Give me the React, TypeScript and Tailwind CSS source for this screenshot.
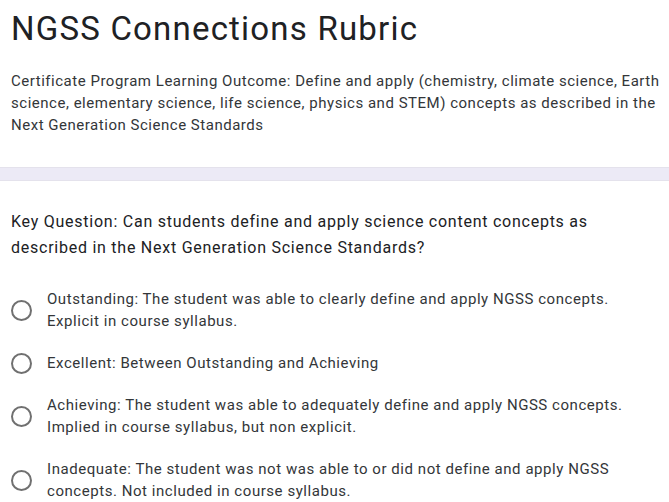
const options = [
  "Outstanding: The student was able to clearly define and apply NGSS concepts. Explicit in course syllabus.",
  "Excellent: Between Outstanding and Achieving",
  "Achieving: The student was able to adequately define and apply NGSS concepts. Implied in course syllabus, but non explicit.",
  "Inadequate: The student was not was able to or did not define and apply NGSS concepts. Not included in course syllabus.",
];

function Radio() {
  return (
    <span className="block w-[21px] h-[21px] shrink-0 rounded-full border-2 border-[#707070]" />
  );
}

export default function App() {
  return (
    <div className="w-[669px] h-[502px] overflow-hidden bg-white text-[#202124] font-['Roboto',sans-serif]">
      <div className="pl-[11px] pr-2 pt-[9px] pb-[31px]">
        <h1 className="text-[33px] leading-[40px] font-normal tracking-[1.2px]">NGSS Connections Rubric</h1>
        <p className="mt-[21px] text-[15px] leading-[22px] tracking-[0.52px] text-[#333639] w-[655px]">
          Certificate Program Learning Outcome: Define and apply (chemistry, climate science, Earth
          science, elementary science, life science, physics and STEM) concepts as described in the
          Next Generation Science Standards
        </p>
      </div>
      <div className="h-[14px] bg-[#eceaf6] border-y border-[#e4e2ec]" />
      <div className="pl-[11px] pr-2 pt-[28px]">
        <p className="text-[16px] leading-[26px] tracking-[0.75px] w-[600px]">
          Key Question: Can students define and apply science content concepts as described in the
          Next Generation Science Standards?
        </p>
        <div className="mt-[27px] flex flex-col gap-[20px]">
          {options.map((o) => (
            <label key={o} className="flex items-center gap-[15px]">
              <Radio />
              <span className="text-[15px] leading-[22px] tracking-[0.55px] text-[#333639] w-[600px]">{o}</span>
            </label>
          ))}
        </div>
      </div>
    </div>
  );
}
